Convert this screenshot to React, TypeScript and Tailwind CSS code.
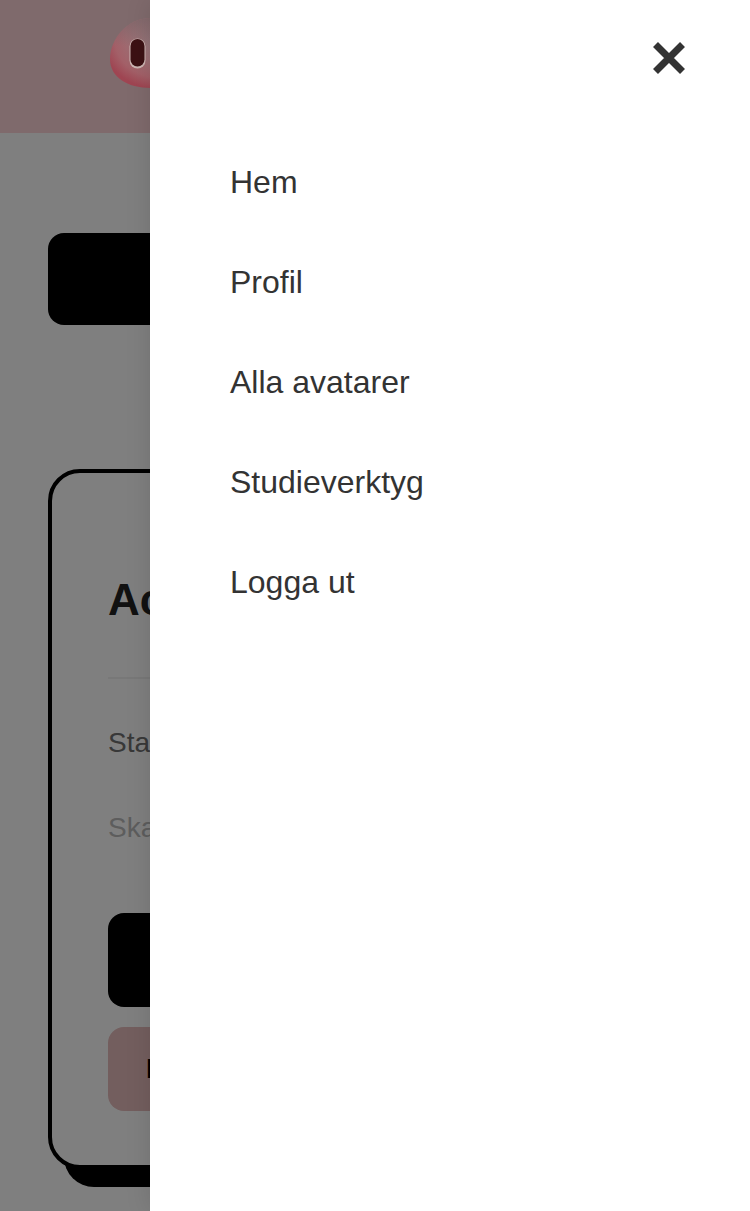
import { useState } from 'react';

const links = ['Hem', 'Profil', 'Alla avatarer', 'Studieverktyg', 'Logga ut'];

function Snout() {
  return (
    <svg width="84" height="72" viewBox="0 0 84 72" className="absolute left-[109px] top-[17px]">
      <defs>
        <radialGradient id="snoutFill" cx="0.62" cy="0.3" r="0.72">
          <stop offset="0" stopColor="#8f777b" />
          <stop offset="0.45" stopColor="#9c7075" />
          <stop offset="0.78" stopColor="#a36068" />
          <stop offset="1" stopColor="#9f4552" />
        </radialGradient>
        <linearGradient id="snoutFade" x1="0" y1="0" x2="0" y2="1">
          <stop offset="0" stopColor="#80696c" stopOpacity="0.9" />
          <stop offset="0.4" stopColor="#80696c" stopOpacity="0" />
        </linearGradient>
      </defs>
      <path d="M1 42C1 22 18 1 42 1C66 1 83 22 83 42C83 62 64 71 42 71C18 71 1 60 1 42Z" fill="url(#snoutFill)" />
      <path d="M1 42C1 22 18 1 42 1C66 1 83 22 83 42C83 62 64 71 42 71C18 71 1 60 1 42Z" fill="url(#snoutFade)" />
      <rect x="20.5" y="21.5" width="16" height="30" rx="8" fill="#cdb6b3" />
      <rect x="21.5" y="22" width="14" height="27.5" rx="7" fill="#3c1114" />
    </svg>
  );
}

export default function App() {
  const [open] = useState(true);

  return (
    <div className="relative h-[1211px] w-[750px] overflow-hidden bg-white font-['Liberation_Sans',Arial,sans-serif]">
      <header className="h-[133px] bg-[#ffd4d8]" />

      <main className="px-12 pt-[100px]">
        <button className="h-[92px] w-full rounded-2xl bg-black text-[28px] font-bold text-white">Ny</button>

        <section className="relative mt-[144px]">
          <div className="absolute -bottom-[18px] left-4 right-4 h-[60px] rounded-[32px] bg-black" />
          <div className="relative h-[700px] rounded-[32px] border-4 border-black bg-white px-14 pt-[102px]">
            <h2 className="text-[44px] leading-[50px] font-bold text-[#222]">Ac</h2>
            <div className="mt-[52px] h-0.5 bg-[#f0f0f0]" />
            <p className="mt-[48px] text-[28px] leading-8 text-[#707070]">Sta</p>
            <p className="mt-[53px] text-[28px] leading-8 text-[#bbbbbb]">Ska</p>
            <button className="mt-[69px] block h-[94px] w-full rounded-2xl bg-black" />
            <button className="mt-5 block h-[84px] w-full rounded-2xl bg-[#e6bcbc] px-[38px] text-left text-[28px] font-bold text-black">
              I
            </button>
          </div>
        </section>
      </main>

      {open && (
        <>
          <div className="absolute inset-0 bg-black/50" />
          <Snout />
          <aside className="absolute inset-y-0 right-0 w-[600px] bg-white shadow-[0_0_24px_rgba(0,0,0,0.12)]">
            <button className="absolute left-[502px] top-[41px] text-[#333]" aria-label="Stäng">
              <svg width="34" height="34" viewBox="0 0 34 34" className="block">
                <path d="M3.5 3.5L30.5 30.5M30.5 3.5L3.5 30.5" stroke="currentColor" strokeWidth="7" />
              </svg>
            </button>
            <nav className="flex flex-col pl-20 pt-[132px]">
              {links.map((link) => (
                <a key={link} className="flex h-[100px] items-center text-[32px] text-[#333]">
                  {link}
                </a>
              ))}
            </nav>
          </aside>
        </>
      )}
    </div>
  );
}
